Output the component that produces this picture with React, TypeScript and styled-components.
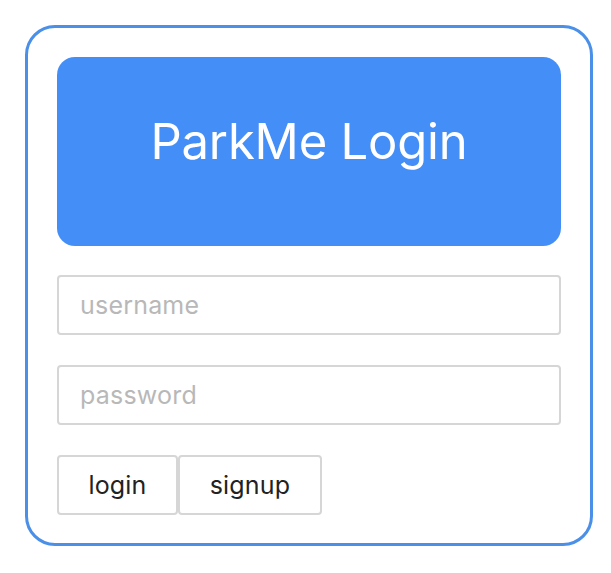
import React from "react";
import styled, { createGlobalStyle } from "styled-components";

const Global = createGlobalStyle`
  html, body { margin: 0; padding: 0; background: #ffffff; }
  body { font-family: Inter, "Noto Sans", "Liberation Sans", sans-serif; }
  * { box-sizing: border-box; }
`;

const Card = styled.div`
  margin: 25px 0 0 25px;
  width: 568px;
  border: 3px solid #4a8fe8;
  border-radius: 30px;
  padding: 29px 29px 28px 29px;
  display: flex;
  flex-direction: column;
  gap: 29px;
`;

const Header = styled.div`
  height: 189px;
  background: #448ef7;
  border-radius: 18px;
  display: flex;
  align-items: center;
  justify-content: center;
  padding-bottom: 20px;
  color: #ffffff;
  font-size: 49px;
  font-weight: 400;
  letter-spacing: -0.2px;
`;

const Form = styled.div`
  display: flex;
  flex-direction: column;
  gap: 30px;
`;

const Input = styled.input`
  height: 60px;
  width: 100%;
  border: 2px solid #d6d6d6;
  border-radius: 4px;
  padding: 0 21px;
  font-family: inherit;
  font-size: 25px;
  letter-spacing: 0.2px;
  color: #222;
  outline: none;
  &::placeholder { color: #b8b8b8; }
`;

const Buttons = styled.div`
  display: flex;
`;

const Button = styled.button<{ $w: number }>`
  height: 60px;
  width: ${(p) => p.$w}px;
  background: #ffffff;
  border: 2px solid #d6d6d6;
  border-radius: 4px;
  font-family: inherit;
  font-size: 25px;
  letter-spacing: 0.2px;
  color: #222;
  padding: 0;
  cursor: pointer;
`;

export default function App() {
  return (
    <>
      <Global />
      <Card>
        <Header>ParkMe Login</Header>
        <Form>
          <Input placeholder="username" />
          <Input placeholder="password" type="password" />
          <Buttons>
            <Button $w={121}>login</Button>
            <Button $w={144}>signup</Button>
          </Buttons>
        </Form>
      </Card>
    </>
  );
}
